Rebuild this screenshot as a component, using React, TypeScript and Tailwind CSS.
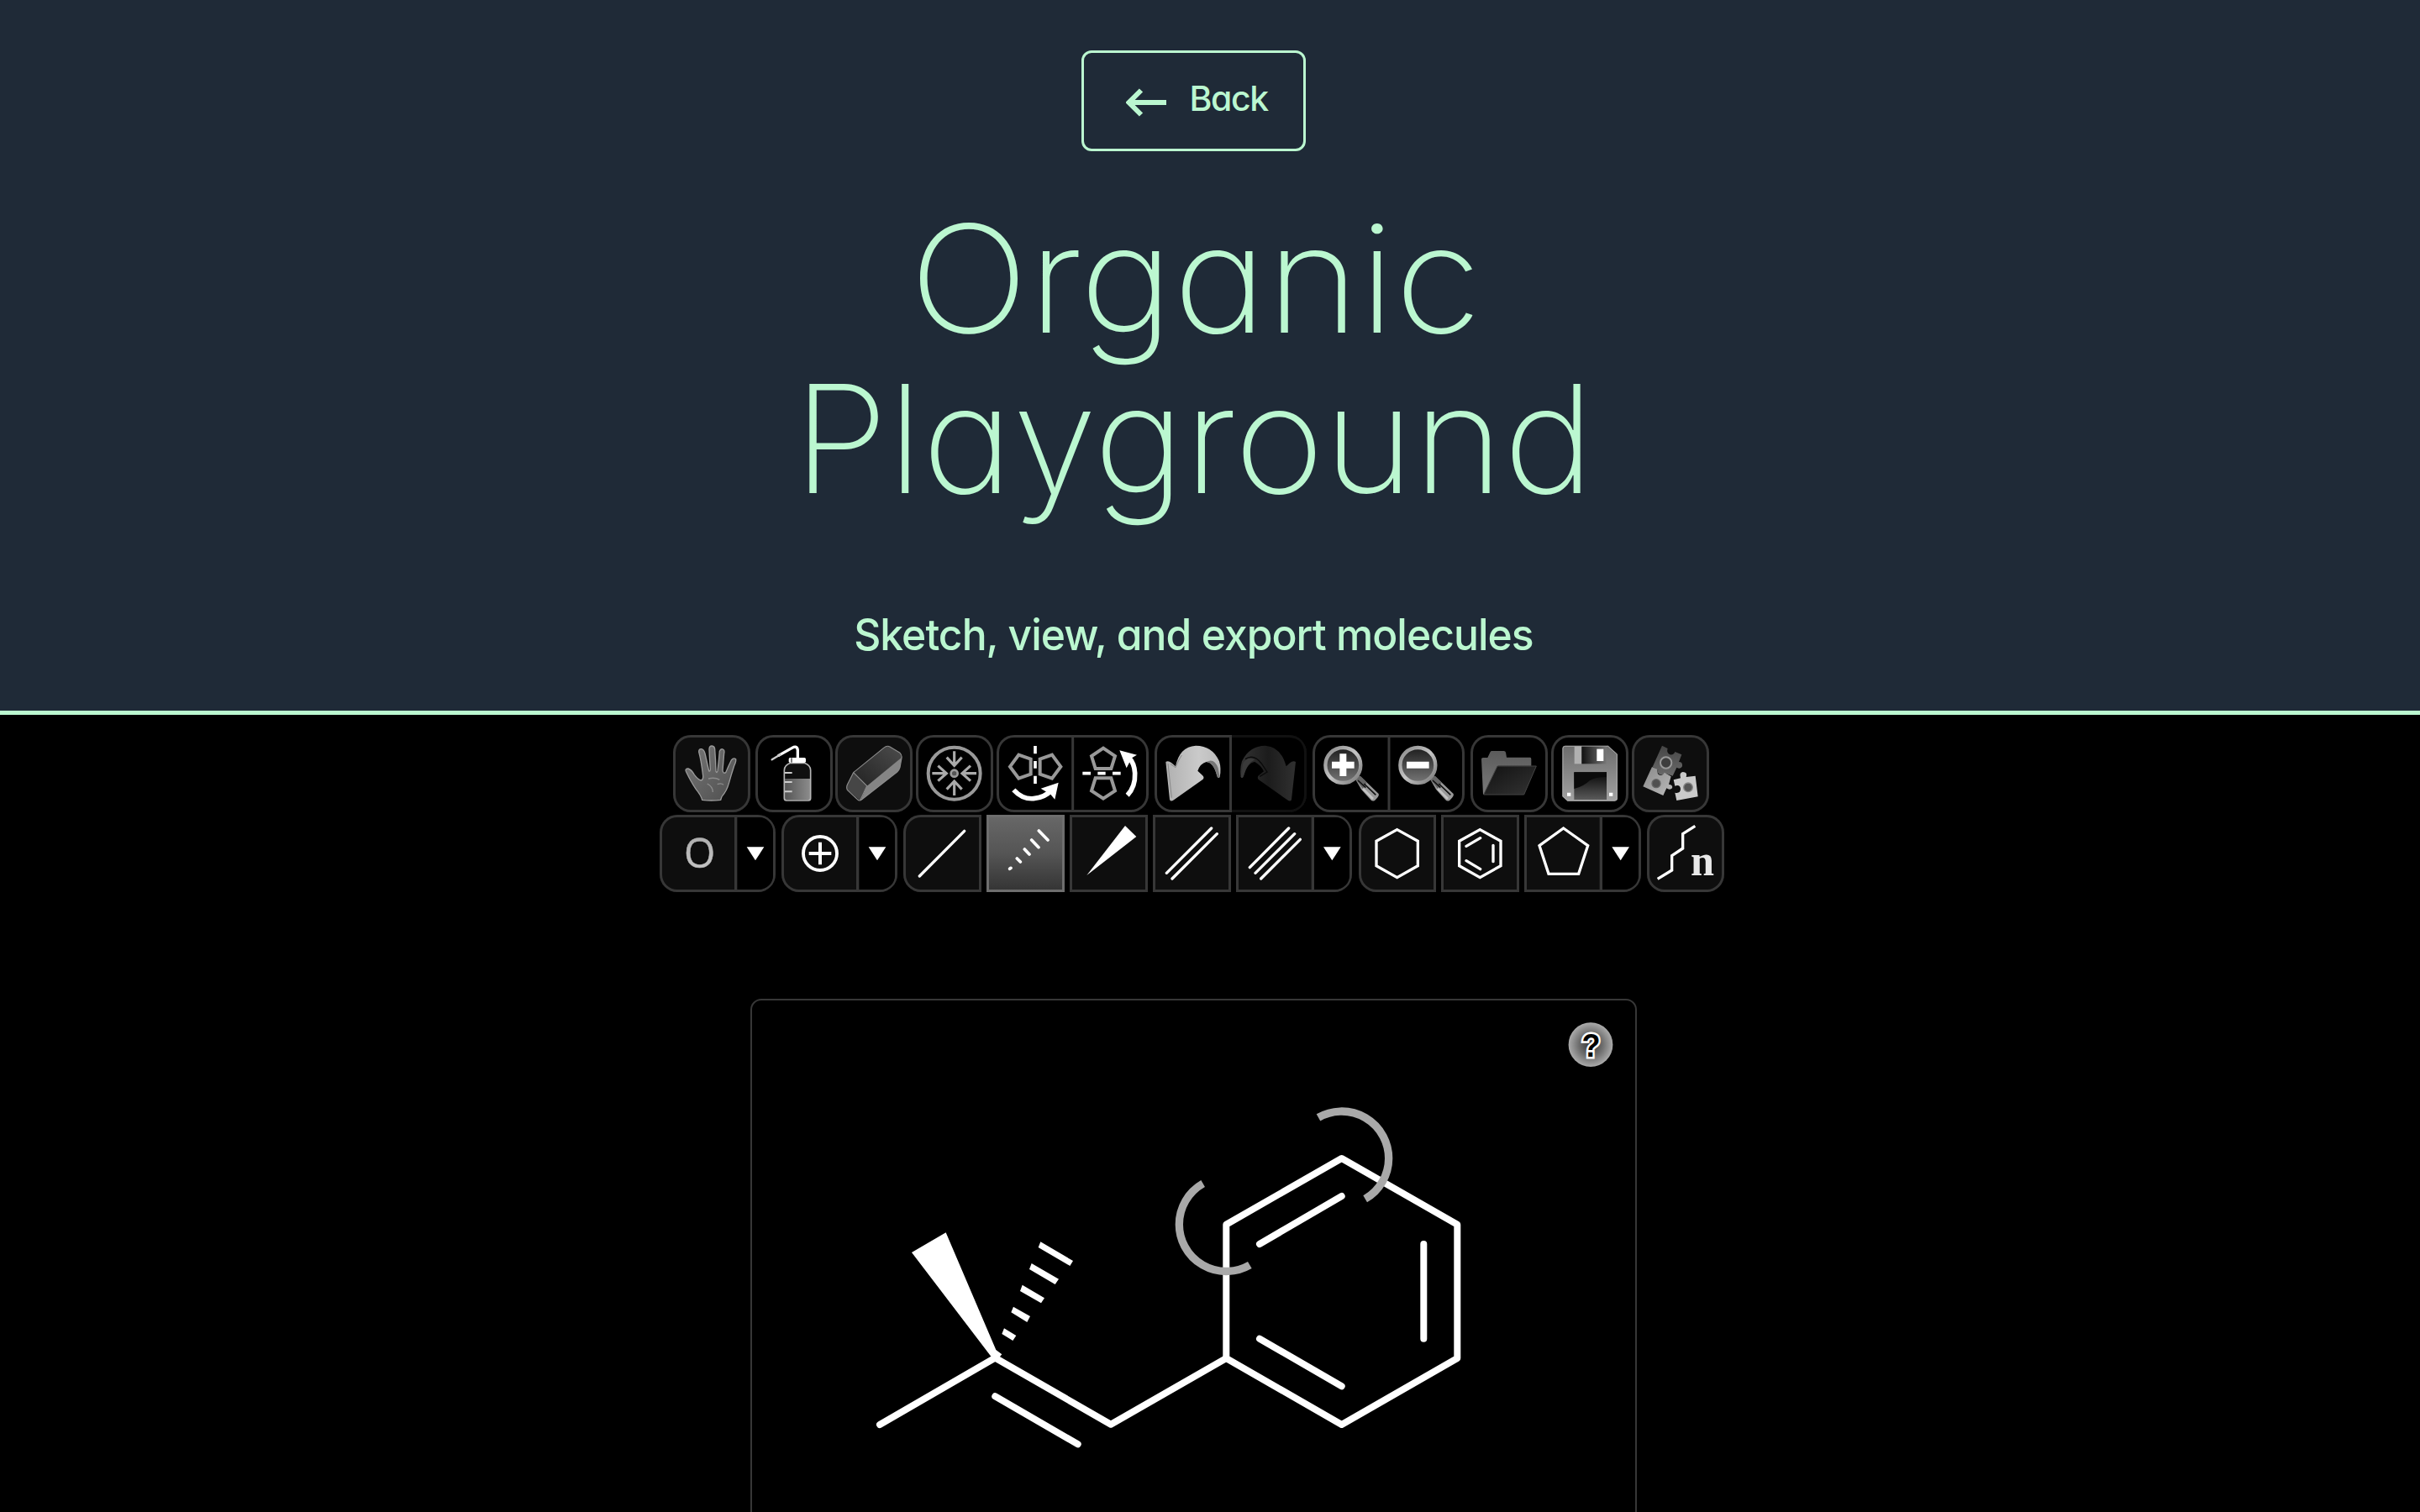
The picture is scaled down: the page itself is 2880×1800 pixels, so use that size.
import type { ReactNode } from "react";

const tile = "h-[92px] shrink-0 overflow-hidden ring-[3px] ring-inset ring-[#373737]";
const dark = "bg-[#0e0e0e]";
const black = "bg-black";

function Icon({ x, y = 30, w = 276, cls = "w-[92px]", children }: { x: number; y?: number; w?: number; cls?: string; children: ReactNode }) {
  return (
    <svg viewBox={`${x} ${y} ${w} 276`} className={`block h-[92px] shrink-0 ${cls}`} fill="none">
      {children}
    </svg>
  );
}

function Defs() {
  return (
    <svg className="absolute h-0 w-0">
      <defs>
        <linearGradient id="handFill" x1="0" y1="0" x2="1" y2="1">
          <stop offset="0" stopColor="#777" />
          <stop offset="1" stopColor="#4f4f4f" />
        </linearGradient>
        <linearGradient id="liquid" x1="0" y1="0" x2="1" y2="0">
          <stop offset="0" stopColor="#555" />
          <stop offset="1" stopColor="#8c8c8c" />
        </linearGradient>
        <linearGradient id="eraserTop" x1="0" y1="1" x2="1" y2="0">
          <stop offset="0" stopColor="#222" />
          <stop offset="1" stopColor="#4c4c4c" />
        </linearGradient>
        <linearGradient id="undoFill" x1="0" y1="0" x2="1" y2="0">
          <stop offset="0" stopColor="#b0b0b0" />
          <stop offset="0.6" stopColor="#cacaca" />
          <stop offset="1" stopColor="#bbb" />
        </linearGradient>
        <linearGradient id="redoFill" x1="0" y1="0" x2="1" y2="0">
          <stop offset="0" stopColor="#333" />
          <stop offset="0.5" stopColor="#1c1c1c" />
          <stop offset="1" stopColor="#303030" />
        </linearGradient>
        <linearGradient id="lensFill" x1="0" y1="0" x2="0" y2="1">
          <stop offset="0" stopColor="#1d1d1d" />
          <stop offset="1" stopColor="#777" />
        </linearGradient>
        <linearGradient id="lensRim" x1="0" y1="0" x2="1" y2="1">
          <stop offset="0" stopColor="#888" />
          <stop offset="0.5" stopColor="#c4c4c4" />
          <stop offset="1" stopColor="#777" />
        </linearGradient>
        <linearGradient id="folderBack" x1="0" y1="0" x2="0" y2="1">
          <stop offset="0" stopColor="#5b5b5b" />
          <stop offset="1" stopColor="#7a7a7a" />
        </linearGradient>
        <linearGradient id="folderFront" x1="0" y1="0" x2="1" y2="1">
          <stop offset="0" stopColor="#111" />
          <stop offset="1" stopColor="#333" />
        </linearGradient>
        <linearGradient id="disk" x1="0" y1="0" x2="0" y2="1">
          <stop offset="0" stopColor="#6c6c6c" />
          <stop offset="1" stopColor="#a2a2a2" />
        </linearGradient>
        <linearGradient id="shutter" x1="0" y1="0" x2="1" y2="0">
          <stop offset="0" stopColor="#111" />
          <stop offset="1" stopColor="#777" />
        </linearGradient>
        <linearGradient id="label" x1="0" y1="0" x2="0" y2="1">
          <stop offset="0" stopColor="#050505" />
          <stop offset="1" stopColor="#5a5a5a" />
        </linearGradient>
        <linearGradient id="oFill" x1="0" y1="0" x2="0" y2="1">
          <stop offset="0" stopColor="#a5a5a5" />
          <stop offset="1" stopColor="#ccc" />
        </linearGradient>
        <linearGradient id="puzzleDark" x1="0" y1="0" x2="0" y2="1">
          <stop offset="0" stopColor="#454545" />
          <stop offset="1" stopColor="#6a6a6a" />
        </linearGradient>
        <linearGradient id="puzzleMid" x1="0" y1="0" x2="1" y2="1">
          <stop offset="0" stopColor="#888" />
          <stop offset="1" stopColor="#bbb" />
        </linearGradient>
        <radialGradient id="help">
          <stop offset="0" stopColor="#333" />
          <stop offset="0.55" stopColor="#707070" />
          <stop offset="1" stopColor="#ababab" />
        </radialGradient>
      </defs>
    </svg>
  );
}

function Lens({ plus }: { plus: boolean }) {
  return (
    <>
      <path d="M758 186L776 176L842 240Q846 248 828 264Q820 268 814 262L780 224Z" fill="#999" />
      <path d="M758 186L776 176L800 200L786 222Z" fill="#666" />
      <path d="M768 192L796 218M790 204L832 244" stroke="#111" strokeWidth="5" />
      <path d="M786 222L822 258" stroke="#c4c4c4" strokeWidth="8" />
      <circle cx="715" cy="138" r="63" fill="url(#lensFill)" stroke="url(#lensRim)" strokeWidth="13" />
      <path d="M675 137H755" stroke="#fff" strokeWidth="24" />
      {plus && <path d="M715 97V177" stroke="#fff" strokeWidth="24" />}
    </>
  );
}

function TopRow() {
  return (
    <div className="flex pl-[801px]">
      <button className={`${tile} ${dark} w-[92px] rounded-[21px]`}>
        <Icon x={64}>
          <path
            d="M168 262Q164 246 146 224Q128 198 110 160Q106 150 118 150Q130 154 140 172Q154 190 164 192Q174 190 170 168Q164 120 156 90Q156 78 166 80Q174 82 178 96L192 158Q196 162 197 152Q194 110 193 80Q194 68 203 69Q212 70 213 80Q216 120 217 160Q220 168 223 158Q228 120 230 88Q234 78 242 81Q249 84 246 96L241 156Q243 170 252 164Q262 140 272 120Q280 110 288 116Q290 124 282 140Q272 170 264 200Q256 230 238 250L234 262Q200 266 168 262Z"
            fill="url(#handFill)"
            stroke="#9a9a9a"
            strokeWidth="4"
          />
          <path d="M190 186Q214 180 230 190M186 204Q206 214 206 234M222 206Q236 200 244 208" stroke="#8c8c8c" strokeWidth="4" />
        </Icon>
      </button>
      <button className={`${tile} ${black} ml-1.5 w-[92px] rounded-[21px]`}>
        <Icon x={357}>
          <path d="M440 103L488 76Q506 66 508 84V112" stroke="#fff" strokeWidth="10" strokeLinecap="round" />
          <path d="M416 118L446 100" stroke="#ccc" strokeWidth="7" strokeLinecap="round" />
          <path d="M482 130Q460 138 460 156V256Q460 264 468 264H546Q554 264 554 256V156Q554 138 532 130Z" fill="#101010" />
          <path d="M461 186H553V262H461Z" fill="url(#liquid)" />
          <path d="M482 130Q460 138 460 156V256Q460 264 468 264H546Q554 264 554 256V156Q554 138 532 130Z" stroke="#b5b5b5" strokeWidth="5" />
          <path d="M462 165H488M462 198H488M462 232H488" stroke="#ccc" strokeWidth="6" />
          <rect x="476" y="111" width="61" height="18" rx="5" fill="#fff" />
          <path d="M486 112V128" stroke="#666" strokeWidth="5" />
        </Icon>
      </button>
      <button className={`${tile} ${dark} ml-[3px] w-[92px] rounded-[21px]`}>
        <Icon x={643}>
          <path d="M708 164L816 76Q828 66 838 72L874 94Q882 102 880 112L756 212Z" fill="url(#eraserTop)" />
          <path d="M756 212L880 110L874 146Q872 154 864 162L734 264Z" fill="#858585" />
          <path d="M708 164L756 212L732 264L686 226Q682 218 686 208Z" fill="#464646" />
          <path d="M708 164L816 76Q828 66 838 72L874 94Q882 102 880 112L874 146Q872 154 864 162L738 260Q730 268 722 260L686 226Q682 218 686 208ZL756 212L732 264" stroke="#8c8c8c" strokeWidth="3.5" />
        </Icon>
      </button>
      <button className={`${tile} ${black} ml-1 w-[92px] rounded-[21px]`}>
        <Icon x={31}>
          <circle cx="168" cy="167" r="93" stroke="#999" strokeWidth="12" />
          <circle cx="168" cy="167" r="12" fill="#555" stroke="#999" strokeWidth="8" />
          <path d="M168 88V140M141 110L168 139L195 110M168 246V194M141 224L168 195L195 224M89 167H141M110 140L140 167L110 194M247 167H195M226 140L196 167L226 194" stroke="#aaa" strokeWidth="9.500" />
        </Icon>
      </button>
      <div className={`${tile} ${black} ml-1 flex w-[181px] rounded-[21px]`}>
        <Icon x={318} w={543} cls="w-[181px]">
          <path d="M590 33V300" stroke="#373737" strokeWidth="9" />
          <path d="M397 101L440 116V170L397 185L366 143ZM516 101L473 116V170L516 185L547 143Z" stroke="#999" strokeWidth="12" />
          <path d="M456 69V97M456 123V149M456 176V204" stroke="#fff" strokeWidth="11" />
          <path d="M379 226Q410 260 450 257Q490 254 516 225" stroke="#fff" strokeWidth="17" />
          <path d="M476 221L539 200L526 260L511 242Z" fill="#fff" />
          <path d="M699 77L741 105L727 150H671L657 105ZM699 257L741 229L727 184H671L657 229Z" stroke="#999" strokeWidth="12" />
          <path d="M625 167H654M679 167H707M732 167H761" stroke="#fff" strokeWidth="11" />
          <path d="M785 245Q814 215 812 166Q810 130 790 110" stroke="#fff" strokeWidth="17" />
          <path d="M757 85L819 101L801 112L782 148Z" fill="#fff" />
        </Icon>
      </div>
      <div className="ml-[7px] flex">
        <button className={`${tile} ${black} w-[92px] rounded-l-[21px]`}>
          <Icon x={43}>
            <path
              d="M83 126Q92 120 104 130L118 142Q132 72 190 68Q250 68 274 124Q282 150 276 180Q270 188 266 176Q254 128 228 126Q206 132 197 158L214 174Q222 182 216 188L112 262Q100 270 97 260Z"
              fill="url(#undoFill)"
            />
            <path d="M276 180Q270 188 266 176Q254 128 228 126Q256 110 270 148Z" fill="#777" />
            <path d="M91 132L104 254M100 134L118 146Q130 116 140 102" stroke="#888" strokeWidth="3" />
          </Icon>
        </button>
        <button className="h-[92px] w-[89px] shrink-0 overflow-hidden rounded-r-[21px] bg-black shadow-[inset_-3px_0_0_#111,inset_0_3px_0_#111,inset_0_-3px_0_#111]">
          <Icon x={318} w={267} cls="w-[89px]">
            <path
              d="M546 126Q537 120 525 130L512 142Q494 72 438 68Q380 68 354 124Q346 150 350 180Q356 188 360 176Q374 128 400 126Q424 140 432 160L412 176Q408 184 414 190L516 262Q528 270 531 260Z"
              fill="url(#redoFill)"
            />
            <path d="M350 180Q356 188 360 176Q374 128 400 118Q376 104 358 130Z" fill="#3a3a3a" />
            <path d="M366 116Q396 96 424 132L444 162L418 178" stroke="#0a0a0a" strokeWidth="4" />
          </Icon>
        </button>
      </div>
      <div className={`${tile} ${black} ml-[7px] flex w-[181px] rounded-[21px]`}>
        <Icon x={606} w={543} cls="w-[181px]">
          <path d="M879 33V300" stroke="#373737" strokeWidth="9" />
          <Lens plus />
          <g transform="translate(267 0)">
            <Lens plus={false} />
          </g>
        </Icon>
      </div>
      <button className={`${tile} ${black} ml-[7px] w-[92px] rounded-[21px]`}>
        <Icon x={451}>
          <path d="M490 116Q490 111 496 111H512L522 90Q523 87 528 87H570Q576 87 577 92L580 110H664Q668 110 668 116V140H550L502 242H496Z" fill="url(#folderBack)" />
          <path d="M547 141H686L642 243H498Z" fill="url(#folderFront)" stroke="#444" strokeWidth="3" />
        </Icon>
      </button>
      <button className={`${tile} ${black} ml-1 w-[92px] rounded-[21px]`}>
        <Icon x={138}>
          <path d="M188 68H342L375 98V256Q375 266 365 266H196L178 250V78Q178 68 188 68Z" fill="url(#disk)" />
          <path d="M188 70H341L373 99V256Q373 264 365 264H197L180 249V78Q180 70 188 70Z" stroke="#aaa" strokeWidth="3" />
          <rect x="221" y="71" width="26" height="62" fill="#b0b0b0" />
          <rect x="247" y="71" width="88" height="62" fill="url(#shutter)" />
          <rect x="301" y="80" width="24" height="43" fill="#fff" />
          <rect x="220" y="163" width="116" height="98" fill="url(#label)" />
          <path d="M220 222Q254 214 276 192Q300 178 336 180V163H220Z" fill="#0a0a0a" />
          <path d="M195 236H208V248H195ZM345 236H358V248H345Z" fill="#fff" />
        </Icon>
      </button>
      <button className={`${tile} ${dark} ml-1 w-[92px] rounded-[21px]`}>
        <Icon x={426}>
          <path d="M534 68L554 78Q548 94 562 100Q576 102 580 90L604 100L594 126Q608 126 606 142Q600 154 586 146L572 176L548 168Q540 176 526 172Q514 164 520 154L500 144Z" fill="url(#puzzleDark)" />
          <circle cx="548" cy="129" r="20" fill="#3d3d3d" stroke="#999" strokeWidth="6" />
          <path d="M498 144L518 152Q514 170 528 174Q538 174 542 164L566 178L558 206Q574 208 570 220Q562 228 550 220L538 246L466 214Z" fill="url(#puzzleMid)" />
          <circle cx="513" cy="203" r="15" fill="#505050" stroke="#666" strokeWidth="4" />
          <path d="M575 190L600 184Q594 164 608 162Q626 162 620 180L653 176L662 250L586 264L580 236Q600 240 600 222Q598 206 580 212Z" fill="#cacaca" />
          <circle cx="627" cy="217" r="16" fill="#555" stroke="#888" strokeWidth="4" />
        </Icon>
      </button>
    </div>
  );
}

const ln = { stroke: "#fff", strokeWidth: 10, strokeLinecap: "round" as const };

function BottomRow() {
  return (
    <div className="mt-[3px] flex pl-[785px]">
      <div className={`${tile} ${dark} flex w-[138px] rounded-[21px]`}>
        <Icon x={14} y={316} w={414} cls="w-[138px]">
          <path d="M286 325H370A50 50 0 0 1 419 374V534A50 50 0 0 1 370 583H286Z" fill="#000" />
          <path d="M286 319V589" stroke="#373737" strokeWidth="10" />
          <text x="157" y="506" textAnchor="middle" fontFamily="Open Sans, sans-serif" fontSize="146" fill="url(#oFill)" stroke="#b8b8b8" strokeWidth="1.500" textLength="112" lengthAdjust="spacingAndGlyphs">
            O
          </text>
          <path d="M325 431H387L356 479Z" fill="#fff" />
        </Icon>
      </div>
      <div className={`${tile} ${dark} ml-[7px] flex w-[138px] rounded-[21px]`}>
        <Icon x={450} y={316} w={414} cls="w-[138px]">
          <path d="M722 325H806A50 50 0 0 1 855 374V534A50 50 0 0 1 806 583H722Z" fill="#000" />
          <path d="M722 319V589" stroke="#373737" strokeWidth="10" />
          <circle cx="588" cy="454" r="60" stroke="#fff" strokeWidth="11.500" />
          <path d="M548 454H628M588 414V494" stroke="#fff" strokeWidth="12" />
          <path d="M761 431H823L792 479Z" fill="#fff" />
        </Icon>
      </div>
      <button className={`${tile} ${dark} ml-[7px] w-[93px] rounded-l-[21px]`}>
        <Icon x={-14} y={316} w={279} cls="w-[93px]">
          <path d="M44 535L204 374" {...ln} />
        </Icon>
      </button>
      <button className="ml-1.5 h-[92px] w-[93px] shrink-0 bg-linear-to-b from-[#686868] via-[#555] to-[#333] ring-[3px] ring-[#6e6e6e] ring-inset">
        <Icon x={282} y={316} w={279} cls="w-[93px]">
          <path d="M365 509L369 506M391 472L403 484M418 439L435 457M443 406L468 432M469 373L501 406" stroke="#fff" strokeWidth="11" strokeLinecap="round" />
        </Icon>
      </button>
      <button className={`${tile} ${dark} ml-1.5 w-[93px]`}>
        <Icon x={579} y={316} w={279} cls="w-[93px]">
          <path d="M640 532L777 355L817 394Z" fill="#fff" />
        </Icon>
      </button>
      <button className={`${tile} ${dark} ml-1.5 w-[93px]`}>
        <Icon x={36} y={316} w={279} cls="w-[93px]">
          <path d="M85 524L245 364M105 544L265 384" {...ln} />
        </Icon>
      </button>
      <div className={`${tile} ${dark} ml-1.5 flex w-[138px] rounded-r-[21px]`}>
        <Icon x={333} y={316} w={414} cls="w-[138px]">
          <path d="M607 325H689A50 50 0 0 1 738 374V534A50 50 0 0 1 689 583H607Z" fill="#000" />
          <path d="M607 319V589" stroke="#373737" strokeWidth="10" />
          <path d="M382 504L521 364M402 524L542 384M422 544L562 404" {...ln} />
          <path d="M645 431H707L676 479Z" fill="#fff" />
        </Icon>
      </div>
      <button className={`${tile} ${dark} ml-2 w-[92px] rounded-l-[21px]`}>
        <Icon x={51} y={316}>
          <path d="M188 369L262 410V498L188 540L114 498V410Z" stroke="#fff" strokeWidth="10" />
        </Icon>
      </button>
      <button className={`${tile} ${dark} ml-1.5 w-[93px]`}>
        <Icon x={346} y={316} w={279} cls="w-[93px]">
          <path d="M485 369L559 410V498L485 540L411 498V410Z" stroke="#fff" strokeWidth="10" />
          <path d="M436 428L486 399M532 425V483M436 480L486 510" {...ln} />
        </Icon>
      </button>
      <div className={`${tile} ${dark} ml-1.5 flex w-[139px] rounded-r-[21px]`}>
        <Icon x={42} y={316} w={417} cls="w-[139px]">
          <path d="M316 325H401A50 50 0 0 1 450 374V534A50 50 0 0 1 401 583H316Z" fill="#000" />
          <path d="M316 319V589" stroke="#373737" strokeWidth="10" />
          <path d="M182 364L269 426L236 527H129L96 426Z" stroke="#fff" strokeWidth="10" />
          <path d="M355 431H417L386 479Z" fill="#fff" />
        </Icon>
      </div>
      <button className={`${tile} ${dark} ml-[7px] w-[92px] rounded-[21px]`}>
        <Icon x={480} y={316}>
          <path d="M518 545L569 514V462L608 436V384L652 356" stroke="#fff" strokeWidth="10" />
          <text x="678" y="533" textAnchor="middle" fontFamily="Liberation Serif, serif" fontWeight="bold" fontSize="158" fill="#e8e8e8" textLength="84" lengthAdjust="spacingAndGlyphs">
            n
          </text>
        </Icon>
      </button>
    </div>
  );
}

function Molecule() {
  return (
    <svg viewBox="895 1191 1051 609" className="block h-[609px] w-[1051px]" fill="none">
      <g stroke="#fff" strokeWidth="8" strokeLinecap="round" strokeLinejoin="round">
        <path d="M1596.700 1379L1734.300 1457.700V1617L1596.700 1696L1459.300 1617V1457.700Z" />
        <path d="M1459.300 1617L1322 1695.700L1184.300 1616.500L1047 1696" />
        <path d="M1499 1481L1596.700 1424M1694.300 1481V1593.700M1499 1593.700L1596.700 1650.300M1184.300 1662.300L1282.700 1719.300" />
      </g>
      <g transform="translate(1060 1440) scale(.33333)" fill="#fff">
        <path d="M75 153L197 82L376 501L397 517L385 531L358 524Z" />
        <path d="M535 115L651 183L640 201L527 135ZM503 192L600 248L587 267L495 213ZM470 269L549 316L537 334L462 291ZM438 347L498 381L487 402L430 367ZM405 424L448 450L436 468L397 444Z" />
      </g>
      <g transform="translate(1380 1300) scale(.33333)" stroke="#a9a9a9" strokeWidth="28">
        <path d="M567 91A168 168 0 0 1 818 237A168 168 0 0 1 734 382" />
        <path d="M155 327A168 168 0 0 0 70 473A168 168 0 0 0 322 618" />
      </g>
      <circle cx="1893" cy="1243.700" r="26.400" fill="url(#help)" />
      <text x="1893.500" y="1258" textAnchor="middle" fontFamily="Liberation Sans, sans-serif" fontWeight="bold" fontSize="38" fill="#000" stroke="#fff" strokeWidth="5" paintOrder="stroke" textLength="22" lengthAdjust="spacingAndGlyphs">
        ?
      </text>
    </svg>
  );
}

export default function App() {
  return (
    <div className="h-[1800px] w-[2880px] overflow-hidden bg-black">
      <Defs />
      <header className="flex h-[851px] flex-col items-center border-b-[5px] border-[#bbf7d0] bg-[#1f2a37] pt-[60px] pr-10 font-[Inter,sans-serif] text-[#bbf7d0] [font-feature-settings:'cv11']">
        <button className="flex h-[120px] w-[267px] shrink-0 items-center rounded-xl border-[3px] border-[#bbf7d0] pl-[50px]">
          <svg viewBox="0 0 48 34" className="mt-1 h-[34px] w-12" fill="none" stroke="currentColor" strokeWidth="6">
            <path d="M48 17H4M18 2.500L3.500 17L18 31.500" />
          </svg>
          <span className="-mt-1.5 ml-[28px] text-[41px] leading-[60px] font-medium tracking-[-1.400px]">Back</span>
        </button>
        <h1 className="mt-[57px] text-center text-[178px] leading-[190.600px] font-[220]">
          <span className="block translate-x-[3px] scale-x-[1.056]">Organic</span>
          <span className="block translate-x-px scale-x-[1.023]">Playground</span>
        </h1>
        <p className="mt-[108px] scale-x-[0.957] text-[52px] leading-[60px] font-medium tracking-[-1px] whitespace-nowrap">Sketch, view, and export molecules</p>
      </header>
      <main className="flex flex-col pt-6">
        <TopRow />
        <BottomRow />
        <section className="mt-[127px] ml-[893px] h-[700px] w-[1055px] shrink-0 rounded-[13px] border-2 border-[#373737]">
          <Molecule />
        </section>
      </main>
    </div>
  );
}
